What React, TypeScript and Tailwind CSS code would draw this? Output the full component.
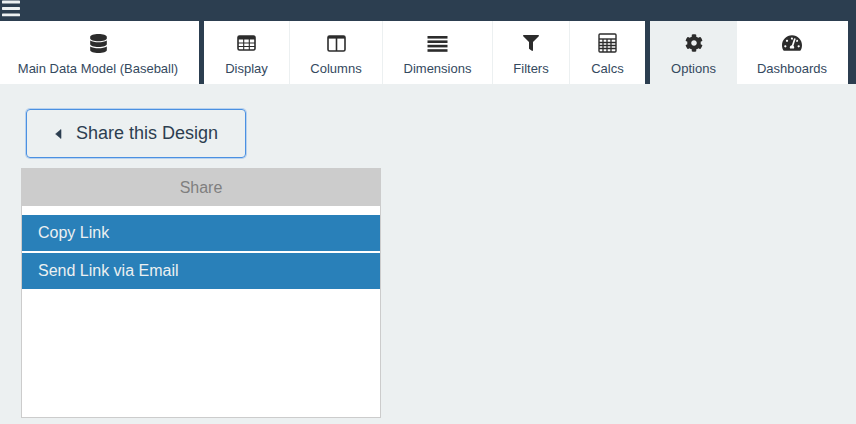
import { FaBars, FaCog, FaDatabase, FaFilter, FaTachometerAlt } from "react-icons/fa";
import type { ReactNode } from "react";

const TableIcon = () => (
  <svg width="19" height="16" viewBox="0 0 19 16">
    <rect x="1" y="1" width="17" height="14" rx="1.5" fill="none" stroke="#2c2c2c" strokeWidth="1.6" />
    <rect x="1" y="1" width="17" height="3.5" fill="#2c2c2c" />
    <path d="M1 8h17M1 11.5h17M6.7 4v11M12.3 4v11" stroke="#2c2c2c" strokeWidth="1.1" />
  </svg>
);

const ColumnsIcon = () => (
  <svg width="19" height="17" viewBox="0 0 19 17">
    <rect x="1" y="1" width="17" height="15" rx="1.5" fill="none" stroke="#2c2c2c" strokeWidth="1.6" />
    <rect x="1" y="1" width="17" height="2.6" fill="#2c2c2c" />
    <path d="M9.5 2v14" stroke="#2c2c2c" strokeWidth="1.6" />
  </svg>
);

const LinesIcon = () => (
  <svg width="21" height="17" viewBox="0 0 21 17" fill="#2c2c2c">
    <rect x="0.5" y="1" width="20" height="2.6" />
    <rect x="0.5" y="5.4" width="20" height="2.6" />
    <rect x="0.5" y="9.8" width="20" height="2.6" />
    <rect x="0.5" y="14.2" width="20" height="2.6" />
  </svg>
);

const CalcIcon = () => (
  <svg width="19" height="20" viewBox="0 0 19 20">
    <rect x="1" y="1" width="17" height="18" rx="1" fill="none" stroke="#2c2c2c" strokeWidth="1.4" />
    <path d="M1 6h17" stroke="#2c2c2c" strokeWidth="1.4" />
    <path d="M1 9.5h17M1 12.5h17M1 15.5h17M5 6v13M9 6v13M13 6v13" stroke="#2c2c2c" strokeWidth="1.3" />
  </svg>
);

const CaretLeft = () => (
  <svg width="7" height="10" viewBox="0 0 7 10" className="mr-[14px] ml-[-1px]">
    <path d="M6 0.5v9L0.6 5z" fill="#2c3e50" stroke="#2c3e50" strokeWidth="0.6" strokeLinejoin="round" />
  </svg>
);

const Tab = ({ icon, label, className }: { icon: ReactNode; label: string; className: string }) => (
  <div className={`flex h-full flex-col items-center ${className}`}>
    <div className="mt-[13px] flex h-[18px] items-center justify-center text-[#2c2c2c]">{icon}</div>
    <div className="mt-[8px] text-[13px] leading-[18px] text-[#34495e]">{label}</div>
  </div>
);

const App = () => {
  return (
    <div className="h-[424px] w-[856px] overflow-hidden bg-[#ecf0f1] font-['Liberation_Sans',Arial,sans-serif]">
      <div className="h-[21px] bg-[#2c3e50] pl-[2px] text-[#ecf0f1]">
        <FaBars className="h-[21px] w-[18px] -translate-y-[2px]" />
      </div>
      <div className="flex h-[63px] bg-[#2c3e50]">
        <Tab icon={<FaDatabase size={19} />} label="Main Data Model (Baseball)" className="w-[199px] bg-white pr-[3px]" />
        <div className="ml-[5px] flex h-full">
          <Tab icon={<TableIcon />} label="Display" className="w-[86px] border-r border-[#ecf0f1] bg-white" />
          <Tab icon={<ColumnsIcon />} label="Columns" className="w-[93px] border-r border-[#ecf0f1] bg-white" />
          <Tab icon={<LinesIcon />} label="Dimensions" className="w-[110px] border-r border-[#ecf0f1] bg-white" />
          <Tab icon={<FaFilter size={16} />} label="Filters" className="w-[77px] border-r border-[#ecf0f1] bg-white" />
          <Tab icon={<CalcIcon />} label="Calcs" className="w-[75px] bg-white" />
        </div>
        <div className="ml-[5px] flex h-full">
          <Tab icon={<FaCog size={18} />} label="Options" className="w-[87px] bg-[#ecf0f1]" />
          <Tab icon={<FaTachometerAlt size={20} />} label="Dashboards" className="w-[111px] bg-white pr-[1px]" />
        </div>
      </div>
      <div className="pl-[21px] pt-[25px]">
        <button className="ml-[5px] flex h-[49px] w-[220px] items-center rounded-[4px] border border-[#4a90e2] pl-[29px] text-[18px] text-[#2c3e50] shadow-[0_0_0_1px_rgba(91,155,232,0.35)]">
          <CaretLeft />
          Share this Design
        </button>
        <div className="mt-[10px] h-[250px] w-[360px] border border-[#cccccc] bg-white">
          <div className="-mx-px -mt-px h-[38px] bg-[#cccccc] text-center text-[16px] leading-[39px] text-[#7f7f7f]">Share</div>
          <div className="mt-[9px] flex flex-col gap-[2px]">
            <div className="h-[36px] bg-[#2980b9] pl-[16px] text-[16px] leading-[35px] text-[#ecf0f1]">Copy Link</div>
            <div className="h-[36px] bg-[#2980b9] pl-[16px] text-[16px] leading-[35px] text-[#ecf0f1]">Send Link via Email</div>
          </div>
        </div>
      </div>
    </div>
  );
};

export default App;
